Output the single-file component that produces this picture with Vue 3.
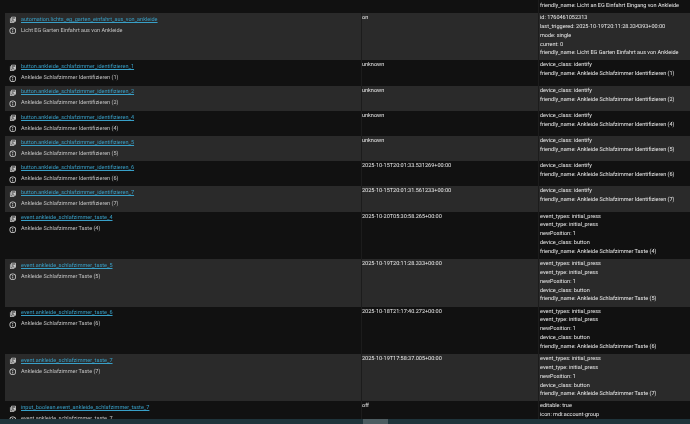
<script setup>
const rows = [
  { id: 'automation.lichts_eg_garten_einfahrt_aus_von_ankleide', name: 'Licht EG Garten Einfahrt aus von Ankleide', state: 'on', attrs: ['id: 1760461052313', 'last_triggered: 2025-10-19T20:11:28.334393+00:00', 'mode: single', 'current: 0', 'friendly_name: Licht EG Garten Einfahrt aus von Ankleide'] },
  { id: 'button.ankleide_schlafzimmer_identifizieren_1', name: 'Ankleide Schlafzimmer Identifizieren (1)', state: 'unknown', attrs: ['device_class: identify', 'friendly_name: Ankleide Schlafzimmer Identifizieren (1)'] },
  { id: 'button.ankleide_schlafzimmer_identifizieren_2', name: 'Ankleide Schlafzimmer Identifizieren (2)', state: 'unknown', attrs: ['device_class: identify', 'friendly_name: Ankleide Schlafzimmer Identifizieren (2)'] },
  { id: 'button.ankleide_schlafzimmer_identifizieren_4', name: 'Ankleide Schlafzimmer Identifizieren (4)', state: 'unknown', attrs: ['device_class: identify', 'friendly_name: Ankleide Schlafzimmer Identifizieren (4)'] },
  { id: 'button.ankleide_schlafzimmer_identifizieren_5', name: 'Ankleide Schlafzimmer Identifizieren (5)', state: 'unknown', attrs: ['device_class: identify', 'friendly_name: Ankleide Schlafzimmer Identifizieren (5)'] },
  { id: 'button.ankleide_schlafzimmer_identifizieren_6', name: 'Ankleide Schlafzimmer Identifizieren (6)', state: '2025-10-15T20:01:33.531269+00:00', attrs: ['device_class: identify', 'friendly_name: Ankleide Schlafzimmer Identifizieren (6)'] },
  { id: 'button.ankleide_schlafzimmer_identifizieren_7', name: 'Ankleide Schlafzimmer Identifizieren (7)', state: '2025-10-15T20:01:31.561233+00:00', attrs: ['device_class: identify', 'friendly_name: Ankleide Schlafzimmer Identifizieren (7)'] },
  { id: 'event.ankleide_schlafzimmer_taste_4', name: 'Ankleide Schlafzimmer Taste (4)', state: '2025-10-20T05:30:58.265+00:00', attrs: ['event_types: initial_press', 'event_type: initial_press', 'newPosition: 1', 'device_class: button', 'friendly_name: Ankleide Schlafzimmer Taste (4)'] },
  { id: 'event.ankleide_schlafzimmer_taste_5', name: 'Ankleide Schlafzimmer Taste (5)', state: '2025-10-19T20:11:28.333+00:00', attrs: ['event_types: initial_press', 'event_type: initial_press', 'newPosition: 1', 'device_class: button', 'friendly_name: Ankleide Schlafzimmer Taste (5)'] },
  { id: 'event.ankleide_schlafzimmer_taste_6', name: 'Ankleide Schlafzimmer Taste (6)', state: '2025-10-18T21:17:40.272+00:00', attrs: ['event_types: initial_press', 'event_type: initial_press', 'newPosition: 1', 'device_class: button', 'friendly_name: Ankleide Schlafzimmer Taste (6)'] },
  { id: 'event.ankleide_schlafzimmer_taste_7', name: 'Ankleide Schlafzimmer Taste (7)', state: '2025-10-19T17:58:37.005+00:00', attrs: ['event_types: initial_press', 'event_type: initial_press', 'newPosition: 1', 'device_class: button', 'friendly_name: Ankleide Schlafzimmer Taste (7)'] },
  { id: 'input_boolean.event_ankleide_schlafzimmer_taste_7', name: 'event.ankleide_schlafzimmer_taste_7', state: 'off', attrs: ['editable: true', 'icon: mdi:account-group'] },
]
</script>

<template>
  <div class="page">
    <div class="table">
      <div class="row top">
        <div class="cell"></div>
        <div class="cell"></div>
        <div class="cell attrs"><div>friendly_name: Licht an EG Einfahrt Eingang von Ankleide</div></div>
      </div>
      <div v-for="(r, i) in rows" :key="r.id" class="row" :class="{ odd: i % 2 === 0 }">
        <div class="cell entity">
          <div class="line">
            <svg class="icon" viewBox="0 0 24 24"><path d="M3 7v13a2 2 0 0 0 2 2h12v-2.4H5.4V7H3z" /><path fill-rule="evenodd" d="M9 2h11a2 2 0 0 1 2 2v12a2 2 0 0 1-2 2H9a2 2 0 0 1-2-2V4a2 2 0 0 1 2-2zm.4 3v3h10.2V5H9.4zm0 5v1.8h5V10h-5zm0 3.4v1.8h7.4v-1.8H9.4z" /></svg>
            <a class="link">{{ r.id }}</a>
          </div>
          <div class="line">
            <svg class="icon" viewBox="0 0 24 24"><path fill-rule="evenodd" d="M12 1.5a10.5 10.5 0 1 0 0 21 10.5 10.5 0 0 0 0-21zm0 2.5a8 8 0 1 1 0 16 8 8 0 0 1 0-16z" /><path d="M10.7 6.6h2.6v2.6h-2.6zM10.7 10.8h2.6v6.6h-2.6z" /></svg>
            <span class="name">{{ r.name }}</span>
          </div>
        </div>
        <div class="cell state">{{ r.state }}</div>
        <div class="cell attrs"><div v-for="a in r.attrs" :key="a">{{ a }}</div></div>
      </div>
    </div>
    <div class="scrollbar"><div class="thumb"></div></div>
  </div>
</template>

<style scoped>
.page {
  position: relative;
  width: 690px;
  height: 424px;
  overflow: hidden;
  background: #111111;
  color: #ececec;
  font-family: Roboto, "Liberation Sans", sans-serif;
  font-size: 5.5px;
  line-height: 8.85px;
  text-rendering: geometricPrecision;
}
.table {
  margin-left: 5px;
  filter: blur(0.2px);
}
.row {
  display: grid;
  grid-template-columns: 356px 177px 152px;
  background: #111111;
}
.row.top {
  height: 13px;
}
.row.top .attrs {
  padding-top: 2px;
}
.row.odd {
  background: #2a2a2a;
}
.cell {
  padding: 1px 0 2.25px 0;
  white-space: nowrap;
  overflow: hidden;
}
.entity {
  padding: 1.6px 0 1.6px 4px;
  box-sizing: border-box;
}
.state {
  border-left: 1px solid #1c1c1c;
}
.attrs {
  padding-left: 1px;
  border-left: 1px solid #1c1c1c;
}
.line {
  display: flex;
  align-items: center;
  gap: 4.5px;
  height: 11px;
}
.icon {
  width: 7.5px;
  height: 7.5px;
  flex: none;
  fill: #d0d0d0;
}
.link {
  color: #38a0c8;
  text-decoration: underline;
}
.name {
  color: #c4c4c4;
}
.scrollbar {
  position: absolute;
  left: 0;
  right: 0;
  bottom: 0;
  height: 5px;
  background: #1f343b;
}
.thumb {
  position: absolute;
  left: 363px;
  top: 0;
  width: 25px;
  height: 5px;
  background: #4c5c61;
}
</style>
